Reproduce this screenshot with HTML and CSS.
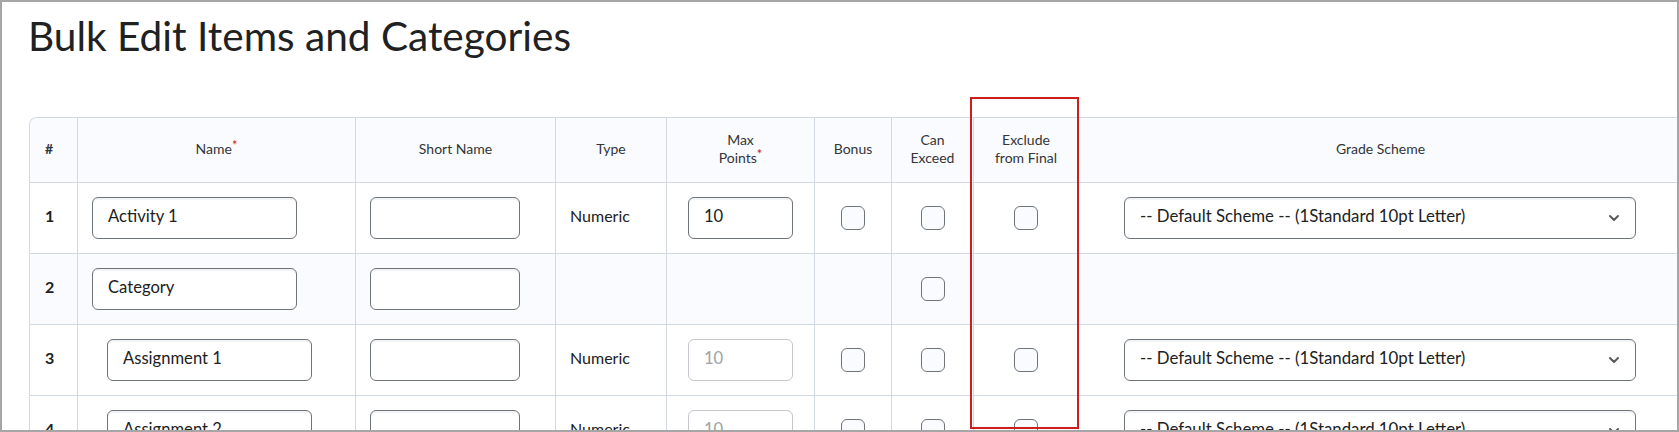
FILE: index.html
```html
<!DOCTYPE html>
<html lang="en">
<head>
<meta charset="utf-8">
<title>Bulk Edit Items and Categories</title>
<link rel="stylesheet" href="styles.css">
</head>
<body>
<div class="frame">
  <h1 class="title">Bulk Edit Items and Categories</h1>
  <div class="grid">
    <div class="th th-num"><span>#</span></div>
    <div class="th"><span>Name<span class="req">*</span></span></div>
    <div class="th"><span>Short Name</span></div>
    <div class="th"><span>Type</span></div>
    <div class="th"><span>Max<br>Points<span class="req">*</span></span></div>
    <div class="th"><span>Bonus</span></div>
    <div class="th"><span>Can<br>Exceed</span></div>
    <div class="th"><span>Exclude<br>from Final</span></div>
    <div class="th"><span>Grade Scheme</span></div>

    <!-- row 1 -->
    <div class="td td-num">1</div>
    <div class="td td-name"><div class="input name-input">Activity 1</div></div>
    <div class="td td-short"><div class="input short-input"></div></div>
    <div class="td td-type">Numeric</div>
    <div class="td td-center"><div class="input pts-input">10</div></div>
    <div class="td td-center"><span class="checkbox"></span></div>
    <div class="td td-center"><span class="checkbox"></span></div>
    <div class="td td-center"><span class="checkbox"></span></div>
    <div class="td td-grade"><div class="select"><span>-- Default Scheme -- (1Standard 10pt Letter)</span><svg class="chev" width="12" height="8" viewBox="0 0 12 8"><path d="M2 2l4 4 4-4" fill="none" stroke="#565a5c" stroke-width="2" stroke-linecap="round" stroke-linejoin="round"/></svg></div></div>

    <!-- row 2 (category) -->
    <div class="td td-num cat">2</div>
    <div class="td td-name cat"><div class="input name-input">Category</div></div>
    <div class="td td-short cat"><div class="input short-input"></div></div>
    <div class="td td-type cat"></div>
    <div class="td td-center cat"></div>
    <div class="td td-center cat"></div>
    <div class="td td-center cat"><span class="checkbox"></span></div>
    <div class="td td-center cat"></div>
    <div class="td td-grade cat"></div>

    <!-- row 3 -->
    <div class="td td-num">3</div>
    <div class="td td-name indent"><div class="input name-input">Assignment 1</div></div>
    <div class="td td-short"><div class="input short-input"></div></div>
    <div class="td td-type">Numeric</div>
    <div class="td td-center"><div class="input pts-input disabled">10</div></div>
    <div class="td td-center"><span class="checkbox"></span></div>
    <div class="td td-center"><span class="checkbox"></span></div>
    <div class="td td-center"><span class="checkbox"></span></div>
    <div class="td td-grade"><div class="select"><span>-- Default Scheme -- (1Standard 10pt Letter)</span><svg class="chev" width="12" height="8" viewBox="0 0 12 8"><path d="M2 2l4 4 4-4" fill="none" stroke="#565a5c" stroke-width="2" stroke-linecap="round" stroke-linejoin="round"/></svg></div></div>

    <!-- row 4 -->
    <div class="td td-num">4</div>
    <div class="td td-name indent"><div class="input name-input">Assignment 2</div></div>
    <div class="td td-short"><div class="input short-input"></div></div>
    <div class="td td-type">Numeric</div>
    <div class="td td-center"><div class="input pts-input disabled">10</div></div>
    <div class="td td-center"><span class="checkbox"></span></div>
    <div class="td td-center"><span class="checkbox"></span></div>
    <div class="td td-center"><span class="checkbox"></span></div>
    <div class="td td-grade"><div class="select"><span>-- Default Scheme -- (1Standard 10pt Letter)</span><svg class="chev" width="12" height="8" viewBox="0 0 12 8"><path d="M2 2l4 4 4-4" fill="none" stroke="#565a5c" stroke-width="2" stroke-linecap="round" stroke-linejoin="round"/></svg></div></div>
  </div>
  <div class="highlight"></div>
</div>
</body>
</html>
```

FILE: styles.css
```css
* { box-sizing: border-box; }

html, body {
  margin: 0;
  padding: 0;
  background: #ffffff;
}

body {
  font-family: Lato, "Noto Sans", "Liberation Sans", sans-serif;
  color: #202122;
}

.frame {
  position: relative;
  width: 1679px;
  height: 432px;
  border: 2px solid #a6a6a6;
  overflow: hidden;
  background: #ffffff;
}

.title {
  margin: 10px 0 0 26px;
  font-size: 40.6px;
  font-weight: 400;
  line-height: 48px;
  color: #202122;
}

.grid {
  margin: 57px 0 0 27px;
  width: 1654px;
  display: grid;
  grid-template-columns: 48px 278px 200px 111px 148px 77px 82px 105px 604px;
  grid-template-rows: 65px repeat(4, 71px);
  border-top: 1px solid #d3d9e3;
  border-left: 1px solid #d3d9e3;
  border-top-left-radius: 8px;
  overflow: hidden;
}

.th,
.td {
  border-right: 1px solid #d3d9e3;
  border-bottom: 1px solid #d3d9e3;
  display: flex;
  align-items: center;
}

.th {
  background: #f9fbff;
  justify-content: center;
  text-align: center;
  font-size: 14px;
  line-height: 18px;
  color: #333537;
  padding-bottom: 3px;
}

.th-num {
  justify-content: flex-start;
  padding-left: 15px;
  font-weight: 700;
}

.req {
  color: #cd2026;
  font-size: 13px;
  vertical-align: 4px;
  line-height: 0;
}

.td {
  font-size: 16px;
  color: #202122;
}

.cat { background: #f9fbff; }

.td-num {
  padding-left: 15px;
  padding-bottom: 6px;
  font-weight: 700;
}

.td-name { padding-left: 14px; }
.td-name.indent { padding-left: 29px; }
.td-short { padding-left: 14px; }
.td-type { padding-left: 14px; padding-bottom: 6px; }
.td-center { justify-content: center; }
.td-grade { padding-left: 45px; }

.input {
  height: 42px;
  border: 1px solid #6e7477;
  border-radius: 6px;
  background: #ffffff;
  box-shadow: inset 0 2px 0 0 rgba(185, 194, 208, 0.2);
  padding: 0 15px 5px 15px;
  display: flex;
  align-items: center;
  font-size: 16.6px;
  color: #202122;
  white-space: nowrap;
}

.name-input { width: 205px; }
.short-input { width: 150px; }
.pts-input { width: 105px; }

.input.disabled {
  border-color: #c4c8cc;
  color: #9ea2a6;
  box-shadow: none;
}

.checkbox {
  display: block;
  width: 24px;
  height: 24px;
  border: 1px solid #6e7477;
  border-radius: 6px;
  background: #f9fbff;
}

.select {
  width: 512px;
  height: 42px;
  border: 1px solid #6e7477;
  border-radius: 6px;
  background: #ffffff;
  box-shadow: inset 0 2px 0 0 rgba(185, 194, 208, 0.2);
  padding: 0 15px 0 15px;
  display: flex;
  align-items: center;
  justify-content: space-between;
  font-size: 16.8px;
  color: #202122;
  white-space: nowrap;
}

.select span { padding-bottom: 5px; }

.chev { flex-shrink: 0; }

.highlight {
  position: absolute;
  left: 968px;
  top: 95px;
  width: 109px;
  height: 332px;
  border: 2px solid #cc1e1e;
  pointer-events: none;
}
```
